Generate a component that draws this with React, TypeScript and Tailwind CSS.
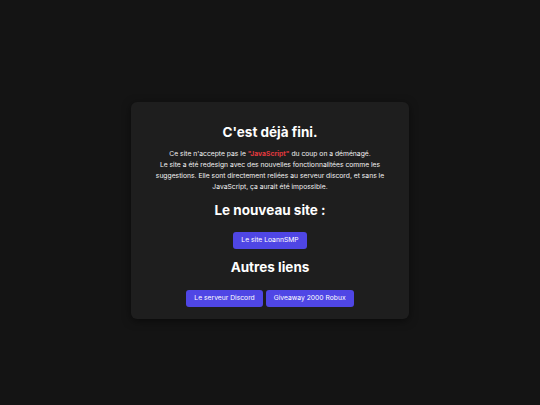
export default function App() {
  return (
    <div className="min-h-[405px] w-full bg-[#141414] pt-[102px] font-['Inter',sans-serif] text-white">
      <div className="mx-auto w-[278px] rounded-[6px] bg-[#1e1e1e] px-4 pt-[20px] pb-[12px] text-center shadow-[0_2px_8px_rgba(0,0,0,0.5)]">
        <h1 className="text-[13.5px] leading-[20px] font-bold">C'est déjà fini.</h1>

        <p className="mt-[6px] text-[6.75px] leading-[11px] text-[#f2f2f2]">
          Ce site n'accepte pas le{' '}
          <span className="font-bold text-[#e0393e]">"JavaScript"</span> du coup on a déménagé.
          <br />
          Le site a été redesign avec des nouvelles fonctionnalitées comme les suggestions. Elle sont
          directement reliées au serveur discord, et sans le JavaScript, ça aurait été impossible.
        </p>

        <h2 className="mt-[8px] text-[13.5px] leading-[20px] font-bold">Le nouveau site :</h2>
        <div className="mt-[12px] flex justify-center">
          <a className="flex h-[17px] items-center rounded-[3px] bg-[#4f46e5] px-[8px] text-[6.75px] text-white">
            Le site LoannSMP
          </a>
        </div>

        <h2 className="mt-[7.5px] text-[13.5px] leading-[20px] font-bold">Autres liens</h2>
        <div className="mt-[13px] flex justify-center gap-[3px]">
          <a className="flex h-[17px] items-center rounded-[3px] bg-[#4f46e5] px-[8px] text-[6.75px] text-white">
            Le serveur Discord
          </a>
          <a className="flex h-[17px] items-center rounded-[3px] bg-[#4f46e5] px-[8px] text-[6.75px] text-white">
            Giveaway 2000 Robux
          </a>
        </div>
      </div>
    </div>
  )
}
